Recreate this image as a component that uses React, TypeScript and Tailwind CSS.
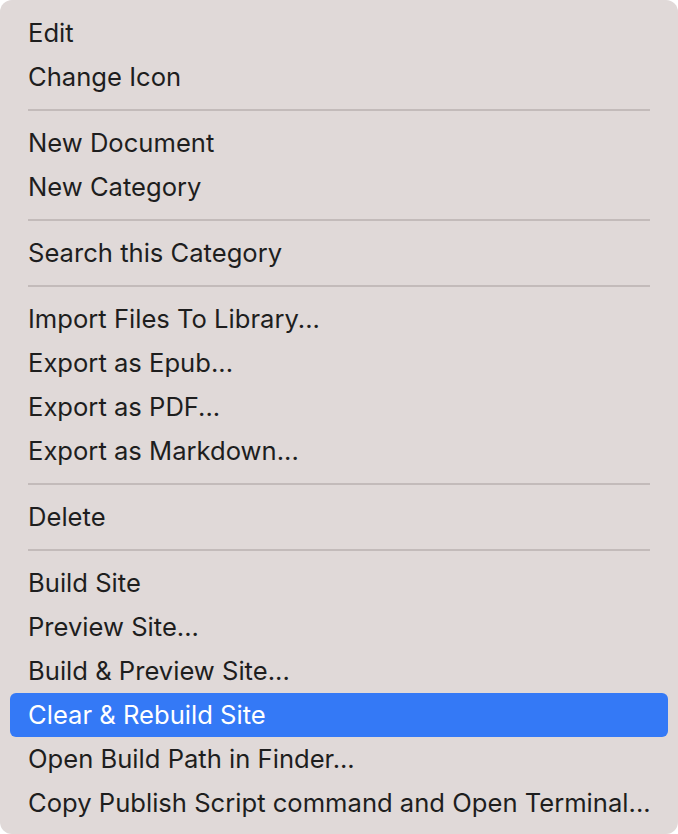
import React from 'react';

type Entry = { label: string; active?: boolean } | 'sep';

const entries: Entry[] = [
  { label: 'Edit' },
  { label: 'Change Icon' },
  'sep',
  { label: 'New Document' },
  { label: 'New Category' },
  'sep',
  { label: 'Search this Category' },
  'sep',
  { label: 'Import Files To Library...' },
  { label: 'Export as Epub...' },
  { label: 'Export as PDF...' },
  { label: 'Export as Markdown...' },
  'sep',
  { label: 'Delete' },
  'sep',
  { label: 'Build Site' },
  { label: 'Preview Site...' },
  { label: 'Build & Preview Site...' },
  { label: 'Clear & Rebuild Site', active: true },
  { label: 'Open Build Path in Finder...' },
  { label: 'Copy Publish Script command and Open Terminal...' },
];

export default function App() {
  return (
    <div className="w-[678px] h-[834px] bg-white">
      <div
        className="w-full h-full bg-[#e0d9d8] rounded-[12px] pt-[11px] pb-[9px] px-[10px] flex flex-col"
        style={{ fontFamily: 'Inter, "Noto Sans", sans-serif' }}
      >
        {entries.map((e, i) =>
          e === 'sep' ? (
            <div key={i} className="h-[22px] flex items-center px-[18px]">
              <div className="w-full h-[2px] bg-[#c3bbba]" />
            </div>
          ) : (
            <div
              key={i}
              className={`h-[44px] flex items-center pl-[18px] pt-[1px] rounded-[6px] text-[25.6px] ${
                e.active ? 'bg-[#3479f6] text-white' : 'text-[#1e1e1e]'
              }`}
            >
              {e.label}
            </div>
          )
        )}
      </div>
    </div>
  );
}
